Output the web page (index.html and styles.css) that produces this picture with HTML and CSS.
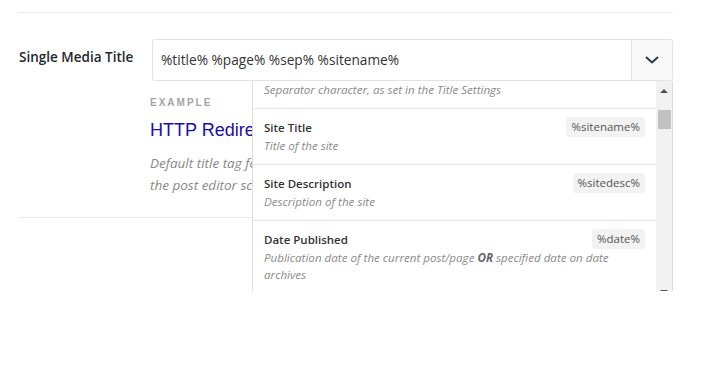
FILE: index.html
```html
<!DOCTYPE html>
<html lang="en">
<head>
    <meta charset="UTF-8">
    <meta name="viewport" content="width=device-width, initial-scale=1.0">
    <title>Single Media Title</title>
    <link rel="stylesheet" href="styles.css">
</head>
<body>
    <div class="settings">
        <div class="row">
            <label class="row-label">Single Media Title</label>
            <div class="field">
                <div class="select">
                    <div class="select-value">%title% %page% %sep% %sitename%</div>
                    <button class="select-toggle" type="button">
                        <svg width="14" height="8" viewBox="0 0 14 8"><path d="M1 1l6 5.5L13 1" fill="none" stroke="#2b3a4a" stroke-width="2"/></svg>
                    </button>

                    <!-- Menu de variáveis -->
                    <div class="menu">
                        <div class="menu-list">
                            <div class="menu-item first">
                                <div class="item-head">
                                    <span class="item-title">Separator</span>
                                    <span class="item-tag">%sep%</span>
                                </div>
                                <div class="item-desc">Separator character, as set in the Title Settings</div>
                            </div>
                            <div class="menu-item">
                                <div class="item-head">
                                    <span class="item-title">Site Title</span>
                                    <span class="item-tag">%sitename%</span>
                                </div>
                                <div class="item-desc">Title of the site</div>
                            </div>
                            <div class="menu-item">
                                <div class="item-head">
                                    <span class="item-title">Site Description</span>
                                    <span class="item-tag">%sitedesc%</span>
                                </div>
                                <div class="item-desc">Description of the site</div>
                            </div>
                            <div class="menu-item">
                                <div class="item-head">
                                    <span class="item-title">Date Published</span>
                                    <span class="item-tag">%date%</span>
                                </div>
                                <div class="item-desc">Publication date of the current post/page <b>OR</b> specified date on date archives</div>
                            </div>
                        </div>
                        <div class="scrollbar">
                            <span class="arrow-up"></span>
                            <span class="thumb"></span>
                            <span class="arrow-down"></span>
                        </div>
                    </div>
                </div>

                <div class="preview">
                    <div class="preview-label">Example</div>
                    <a class="preview-title" href="#">HTTP Redirect Status Codes - Page 2 - Site</a>
                    <p class="preview-desc">Default title tag for single media attachments. Can be overridden in<br>the post editor screen.</p>
                </div>
            </div>
        </div>
    </div>
</body>
</html>
```

FILE: styles.css
```css
html, body {
    min-height: 100vh;
}
body {
    margin: 0;
    font-family: "Open Sans", "Noto Sans", sans-serif;
    background: #fff;
    color: #23282d;
}
.settings {
    margin: 12px 29px 0 18px;
    border-top: 1px solid #ebebeb;
}
.row {
    display: grid;
    grid-template-columns: 134px 1fr;
    padding-top: 26px;
    border-bottom: 1px solid #ebebeb;
}
.row-label {
    font-size: 13.5px;
    font-weight: 600;
    color: #23282d;
    padding: 9px 0 0 1px;
}
.select {
    position: relative;
    display: flex;
    height: 40px;
    border: 1px solid #e3e3e3;
    border-radius: 3px;
    background: #fff;
}
.select-value {
    flex: 1;
    padding: 0 8px;
    line-height: 40px;
    font-size: 13.7px;
    color: #333;
}
.select-toggle {
    width: 41px;
    border: none;
    border-left: 1px solid #e3e3e3;
    background: #f8f8f8;
    padding: 0;
    display: flex;
    align-items: center;
    justify-content: center;
}
.menu {
    position: absolute;
    top: 41px;
    left: 99px;
    right: -1px;
    height: 210px;
    display: flex;
    background: #fff;
    border: 1px solid #dcdcdc;
    border-top: none;
    border-bottom: none;
    overflow: hidden;
    z-index: 2;
}
.menu-list {
    flex: 1;
    overflow: hidden;
}
.menu-item {
    padding: 10px 11px 10px 11px;
    border-bottom: 1px solid #e5e5e5;
}
.menu-item.first {
    margin-top: -28px;
}
.item-head {
    display: flex;
    justify-content: space-between;
    align-items: flex-start;
}
.item-title {
    font-size: 11.5px;
    font-weight: 600;
    line-height: 18px;
    color: #333;
}
.item-tag {
    margin-top: -2px;
    padding: 0 5px;
    line-height: 20px;
    font-size: 11.5px;
    color: #555;
    background: #f2f2f2;
    border-radius: 3px;
}
.item-desc {
    font-size: 11.6px;
    font-style: italic;
    line-height: 17px;
    color: #8a8a8a;
}
.item-desc b {
    color: #666;
}
.scrollbar {
    width: 16px;
    background: #f1f1f1;
    display: flex;
    flex-direction: column;
    align-items: center;
}
.arrow-up {
    margin-top: 8px;
    border: 4px solid transparent;
    border-top: none;
    border-bottom: 4px solid #505050;
}
.thumb {
    margin-top: 17px;
    width: 13px;
    height: 19px;
    background: #c1c1c1;
}
.arrow-down {
    margin-top: auto;
    margin-bottom: -3px;
    border: 4px solid transparent;
    border-bottom: none;
    border-top: 4px solid #505050;
}
.preview {
    padding: 16px 0 21px 0;
    margin-left: -2px;
}
.preview-label {
    font-family: "Liberation Sans", Arial, sans-serif;
    font-size: 10px;
    font-weight: bold;
    letter-spacing: 2px;
    text-transform: uppercase;
    color: #a0a5aa;
}
.preview-title {
    display: block;
    margin-top: 11px;
    font-family: "Liberation Sans", Arial, sans-serif;
    font-size: 18px;
    line-height: 22px;
    color: #1a0dab;
    text-decoration: none;
}
.preview-desc {
    margin: 11px 0 0 0;
    font-size: 13.5px;
    font-style: italic;
    line-height: 22px;
    color: #888;
}
```
